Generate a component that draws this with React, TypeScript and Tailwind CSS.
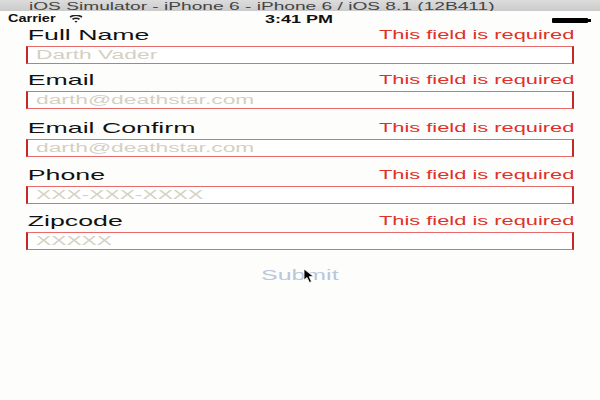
import React from 'react';

const fields = [
  { label: 'Full Name', placeholder: 'Darth Vader', gap: 'mt-[26px]' },
  { label: 'Email', placeholder: 'darth@deathstar.com', gap: 'mt-[7px]' },
  { label: 'Email Confirm', placeholder: 'darth@deathstar.com', gap: 'mt-[10px]' },
  { label: 'Phone', placeholder: 'XXX-XXX-XXXX', gap: 'mt-[9px]' },
  { label: 'Zipcode', placeholder: 'XXXXX', gap: 'mt-[8px]' },
];

function Wide({ children, className = '' }: { children: React.ReactNode; className?: string }) {
  return <span className={`inline-block whitespace-nowrap ${className}`}>{children}</span>;
}

function Field({ label, placeholder, gap }: { label: string; placeholder: string; gap: string }) {
  return (
    <div className={gap}>
      <div className="flex h-[18px] items-center justify-between text-[15px] leading-[18px]">
        <Wide className="origin-left scale-x-[1.78] pl-px text-[#111]">{label}</Wide>
        <Wide className="origin-right scale-x-[1.82] text-[12px] text-[#e0302a]">This field is required</Wide>
      </div>
      <div className="mt-[2px] flex h-[18px] items-center border border-x-2 border-[#e86a6a] border-x-[#c42828] bg-white pl-[8px]">
        <Wide className="origin-left scale-x-[1.9] text-[12px] leading-none text-[#d4d0c2]">{placeholder}</Wide>
      </div>
    </div>
  );
}

export default function App() {
  return (
    <div className="relative h-[400px] w-[600px] overflow-hidden bg-[#fdfdfb] font-['Liberation_Sans',Arial,sans-serif]">
      {/* window title */}
      <div className="flex h-[11px] items-end justify-center overflow-hidden bg-gradient-to-b from-[#dcdcdc] to-[#cbcbcb] text-[11px] leading-[13px] text-[#444]">
        <span className="inline-block translate-x-[-38px] translate-y-[2px] scale-x-[1.74] whitespace-nowrap">
          iOS Simulator - iPhone 6 - iPhone 6 / iOS 8.1 (12B411)
        </span>
      </div>

      {/* status bar */}
      <div className="relative flex h-[14px] items-center px-[8px] pt-[2px] text-[10px] font-bold leading-none text-[#111]">
        <div className="w-[61px]">
          <Wide className="origin-left scale-x-[1.45]">Carrier</Wide>
        </div>
        <svg width="14" height="8" viewBox="0 0 14 8">
          <path d="M1 2 Q7 -1.5 13 2" stroke="#222" strokeWidth="1.6" fill="none" />
          <path d="M3.5 4.3 Q7 2.2 10.5 4.3" stroke="#222" strokeWidth="1.6" fill="none" />
          <path d="M5.5 6.3 L7 7.8 L8.5 6.3 Q7 5.3 5.5 6.3Z" fill="#222" />
        </svg>
        <span className="absolute left-[265px] top-[4px] inline-block origin-left scale-x-[1.8] whitespace-nowrap">3:41 PM</span>
        <div className="ml-auto mr-[1px] mt-[2px] flex items-center">
          <div className="h-[5px] w-[36px] rounded-[1px] bg-black" />
          <div className="h-[3px] w-[3px] bg-black" />
        </div>
      </div>

      {/* form */}
      <div className="px-[26px]">
        <div className="-mt-[25px]">
          {fields.map((f) => (
            <Field key={f.label} {...f} />
          ))}
        </div>
        <div className="mt-[16px] flex justify-center text-[14px] leading-[18px] text-[#b9c7dc]">
          <Wide className="origin-center scale-x-[1.78]">Submit</Wide>
        </div>
      </div>

      {/* mouse cursor */}
      <svg className="absolute left-[303px] top-[268px]" width="14" height="16" viewBox="0 0 14 16">
        <path d="M1 1 L1 12 L4 9.5 L6.5 14.5 L8.5 13.5 L6.2 8.7 L10.5 8.5 Z" fill="#000" stroke="#fff" strokeWidth="0.8" />
      </svg>
    </div>
  );
}
